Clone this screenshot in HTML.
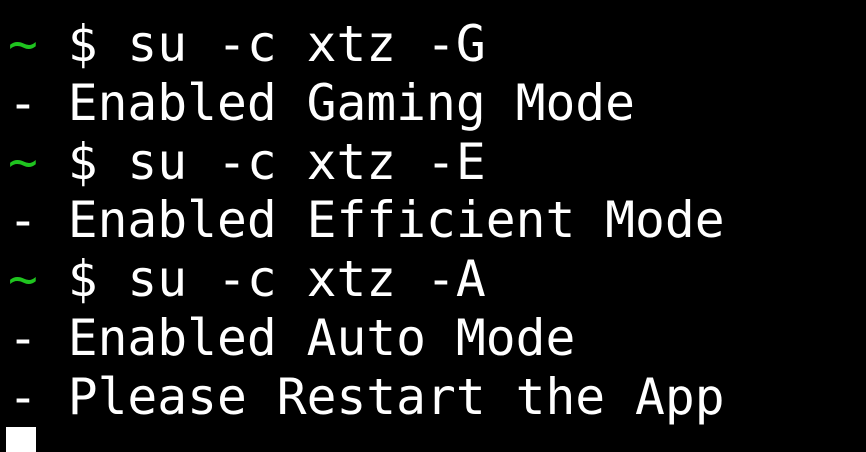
<!DOCTYPE html>
<html><head><meta charset="utf-8"><style>
html,body{margin:0;padding:0;background:#000;width:866px;height:452px;overflow:hidden}
pre{margin:0;position:absolute;left:8px;top:15px;font-family:"DejaVu Sans Mono","Liberation Mono",monospace;font-size:49.6px;line-height:58.8px;color:#fff}
.g{color:#1fc41f}
.cur{position:absolute;left:6px;top:427px;width:30px;height:25px;background:#fff}
</style></head><body>
<pre><span class="g">~</span> $ su -c xtz -G
- Enabled Gaming Mode
<span class="g">~</span> $ su -c xtz -E
- Enabled Efficient Mode
<span class="g">~</span> $ su -c xtz -A
- Enabled Auto Mode
- Please Restart the App</pre>
<div class="cur"></div>
</body></html>
